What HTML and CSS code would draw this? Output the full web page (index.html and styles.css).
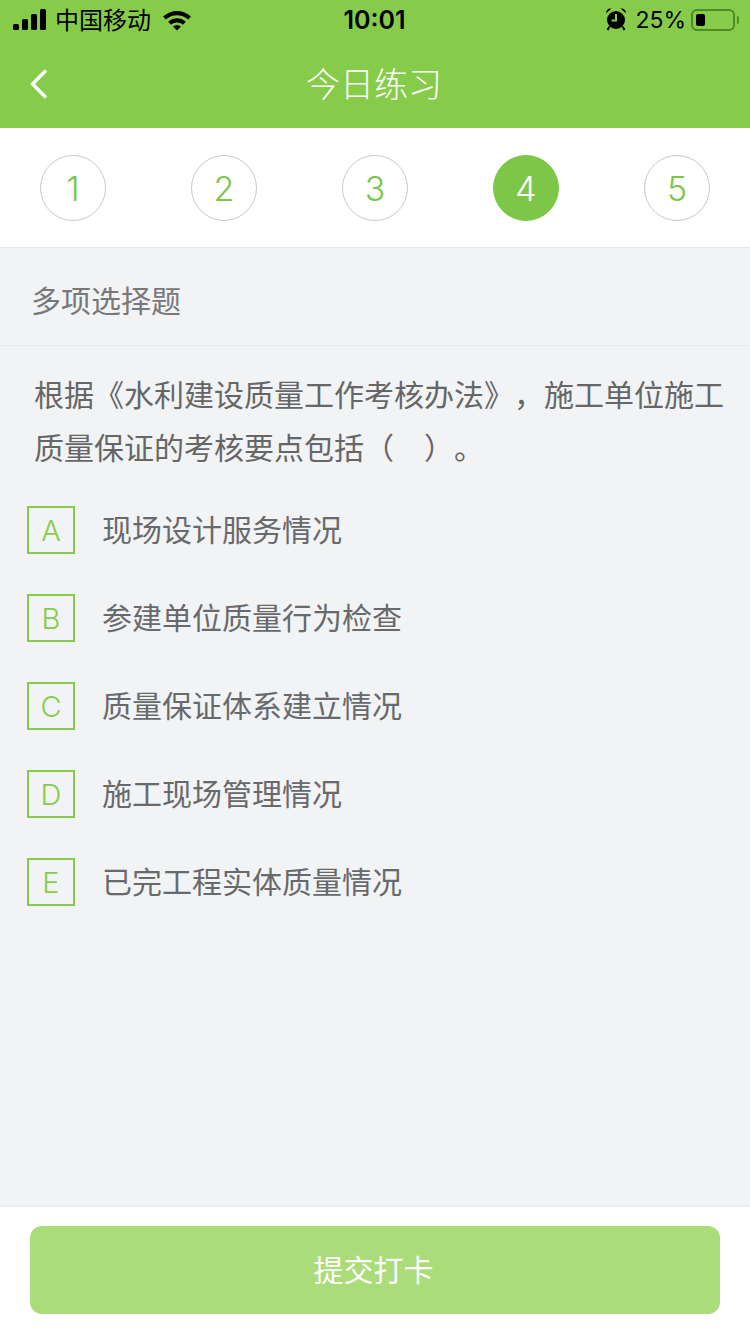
FILE: index.html
```html
<!DOCTYPE html>
<html lang="zh-CN">
<head>
  <meta charset="UTF-8">
  <title>今日练习</title>
  <link rel="stylesheet" href="styles.css">
</head>
<body>
  <header class="top">
    <div class="status">
      <div class="status-left">
        <svg class="signal" width="34" height="21" viewBox="0 0 34 21">
          <rect x="0" y="15" width="6" height="6" rx="1.5"/>
          <rect x="9" y="10" width="6" height="11" rx="1.5"/>
          <rect x="18" y="5" width="6" height="16" rx="1.5"/>
          <rect x="27" y="0" width="6" height="21" rx="1.5"/>
        </svg>
        <span class="carrier">中国移动</span>
        <svg class="wifi" width="30" height="22" viewBox="0 0 30 22">
          <path d="M1 7.500C9 0 21 0 29 7.500L26.200 10.600C19.800 4.800 10.200 4.800 3.800 10.600Z"/>
          <path d="M6.200 12.800C11.500 8.200 18.500 8.200 23.800 12.800L21 15.800C17.300 12.700 12.700 12.700 9 15.800Z"/>
          <path d="M11 17.500C13.500 15.500 16.500 15.500 19 17.500L15 21.500Z"/>
        </svg>
      </div>
      <div class="time">10:01</div>
      <div class="status-right">
        <svg class="alarm" width="22" height="24" viewBox="0 0 22 24">
          <circle cx="11" cy="13" r="9"/>
          <path d="M1 6.500C1 3 3.500 1 6.500 1.500Z"/>
          <path d="M21 6.500C21 3 18.500 1 15.500 1.500Z"/>
          <path d="M4.500 19.500L2.500 23M17.500 19.500L19.500 23" stroke="#000" stroke-width="2" fill="none"/>
          <path d="M11 7V13.500H6.500" stroke="#86cc4a" stroke-width="2" fill="none"/>
        </svg>
        <span class="percent">25%</span>
        <div class="battery"><div class="battery-level"></div></div>
        <div class="battery-tip"></div>
      </div>
    </div>
    <div class="nav">
      <svg class="back" width="20" height="32" viewBox="0 0 20 32">
        <path d="M17 2.500L3.500 16L17 29.500" fill="none" stroke="#fff" stroke-width="3.500"/>
      </svg>
      <h1 class="title">今日练习</h1>
    </div>
  </header>

  <div class="steps">
    <div class="step">1</div>
    <div class="step">2</div>
    <div class="step">3</div>
    <div class="step active">4</div>
    <div class="step">5</div>
  </div>

  <main class="content">
    <div class="type">多项选择题</div>
    <p class="question">根据《水利建设质量工作考核办法》，施工单位施工质量保证的考核要点包括（　）。</p>
    <ul class="options">
      <li class="option"><span class="letter">A</span><span class="option-text">现场设计服务情况</span></li>
      <li class="option"><span class="letter">B</span><span class="option-text">参建单位质量行为检查</span></li>
      <li class="option"><span class="letter">C</span><span class="option-text">质量保证体系建立情况</span></li>
      <li class="option"><span class="letter">D</span><span class="option-text">施工现场管理情况</span></li>
      <li class="option"><span class="letter">E</span><span class="option-text">已完工程实体质量情况</span></li>
    </ul>
  </main>

  <footer class="bottom">
    <button class="submit">提交打卡</button>
  </footer>
</body>
</html>
```

FILE: styles.css
```css
* {
  box-sizing: border-box;
}
body {
  margin: 0;
  height: 1334px;
  display: flex;
  flex-direction: column;
  background: #f2f3f5;
  font-family: "Noto Sans CJK SC", "Liberation Sans", sans-serif;
  text-spacing-trim: space-all;
}
.top {
  height: 128px;
  background: #86cc4a;
}
.status {
  height: 40px;
  padding: 0 11px 0 13px;
  display: flex;
  align-items: center;
  justify-content: space-between;
  color: #000;
  font-size: 24px;
}
.status svg {
  display: block;
  fill: #000;
}
.status-left,
.status-right {
  width: 250px;
  display: flex;
  align-items: center;
}
.status-right {
  justify-content: flex-end;
}
.signal {
  margin-bottom: 1px;
}
.carrier {
  margin: 0 0 3px 8px;
}
.wifi {
  margin: 0 0 1px 11px;
}
.time {
  margin-right: 3px;
  font-family: Inter, "Liberation Sans", sans-serif;
  font-size: 25px;
  font-weight: 600;
}
.alarm {
  margin-bottom: 3px;
}
.percent {
  margin: 0 5px 1px 8px;
  font-family: Inter, "Liberation Sans", sans-serif;
  font-size: 23px;
}
.battery {
  width: 44px;
  height: 22px;
  padding: 3px;
  border: 2px solid #4f8a28;
  border-radius: 6px;
}
.battery-level {
  width: 9px;
  height: 12px;
  background: #000;
  border-radius: 2px;
}
.battery-tip {
  width: 2px;
  height: 8px;
  margin-left: 2px;
  background: #4f8a28;
  border-radius: 0 2px 2px 0;
}
.nav {
  height: 88px;
  padding-left: 29px;
  display: flex;
  align-items: center;
  position: relative;
}
.title {
  position: absolute;
  left: 0;
  right: 0;
  margin: 0;
  padding: 0 2px 4px 0;
  text-align: center;
  color: #fff;
  font-size: 34px;
  font-weight: 300;
}
.steps {
  height: 120px;
  padding: 27px 40px 0;
  display: flex;
  justify-content: space-between;
  align-items: flex-start;
  background: #fff;
  border-bottom: 1px solid #e8e8e8;
}
.step {
  width: 66px;
  height: 66px;
  display: flex;
  align-items: center;
  justify-content: center;
  border: 1px solid #c9c9c9;
  border-radius: 50%;
  color: #7dc44a;
  font-family: Inter, "Liberation Sans", sans-serif;
  font-size: 34px;
  font-weight: 350;
}
.step.active {
  border-color: #7dc748;
  background: #7dc748;
  color: #fff;
}
.content {
  flex: 1;
}
.type {
  height: 98px;
  padding: 4px 0 0 31px;
  display: flex;
  align-items: center;
  border-bottom: 1px solid #e9eaec;
  color: #77787a;
  font-size: 30px;
}
.question {
  margin: 21px 20px 0 34px;
  color: #666;
  font-size: 30px;
  line-height: 53px;
}
.options {
  margin: 0;
  padding: 33px 0 0 27px;
  list-style: none;
}
.option {
  height: 48px;
  margin-bottom: 40px;
  display: flex;
  align-items: center;
  color: #68696b;
  font-size: 30px;
}
.option-text {
  margin: 0 0 4px -1px;
}
.letter {
  width: 48px;
  height: 48px;
  margin-right: 28px;
  display: flex;
  align-items: center;
  justify-content: center;
  border: 2px solid #86cc4a;
  color: #86cc4a;
  font-family: Inter, "Liberation Sans", sans-serif;
  font-size: 29px;
  font-weight: 350;
}
.bottom {
  height: 128px;
  padding: 19px 30px 0;
  background: #fff;
  border-top: 1px solid #e8e9eb;
}
.submit {
  display: block;
  width: 100%;
  height: 88px;
  padding: 0 3px 4px 0;
  border: none;
  border-radius: 12px;
  background: #aadc79;
  color: #fff;
  font-family: inherit;
  font-size: 30px;
}
```
